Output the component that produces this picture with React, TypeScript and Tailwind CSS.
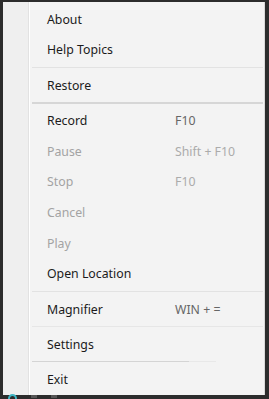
import React from 'react';

type Row =
  | { kind: 'item'; label: string; shortcut?: string; disabled?: boolean; h: number }
  | { kind: 'sep'; h: number; line: string; thick?: boolean; short?: boolean };

const rows: Row[] = [
  { kind: 'item', label: 'About', h: 30 },
  { kind: 'item', label: 'Help Topics', h: 30 },
  { kind: 'sep', h: 6, line: 'bg-[#e2e2e2]' },
  { kind: 'item', label: 'Restore', h: 30 },
  { kind: 'sep', h: 5, line: 'bg-[#d6d6d6]', thick: true },
  { kind: 'item', label: 'Record', shortcut: 'F10', h: 30.6 },
  { kind: 'item', label: 'Pause', shortcut: 'Shift + F10', disabled: true, h: 30.6 },
  { kind: 'item', label: 'Stop', shortcut: 'F10', disabled: true, h: 30.6 },
  { kind: 'item', label: 'Cancel', disabled: true, h: 30.6 },
  { kind: 'item', label: 'Play', disabled: true, h: 30.6 },
  { kind: 'item', label: 'Open Location', h: 30.6 },
  { kind: 'sep', h: 6, line: 'bg-[#e2e2e2]' },
  { kind: 'item', label: 'Magnifier', shortcut: 'WIN + =', h: 29.5 },
  { kind: 'sep', h: 5, line: 'bg-[#e6e6e6]' },
  { kind: 'item', label: 'Settings', h: 29.5 },
  { kind: 'sep', h: 6, line: 'bg-[#d8d8d8]', short: true },
  { kind: 'item', label: 'Exit', h: 30 },
];

export default function App() {
  return (
    <div className="w-[269px] h-[399px] bg-[#2c2c2c] flex flex-col overflow-hidden" style={{ fontFamily: '"Noto Sans", "Open Sans", sans-serif' }}>
      <div className="h-[2px] shrink-0" />
      <div className="flex flex-1 pl-[3px] pr-[4px]">
        <div className="flex flex-1 bg-[#f3f3f3] border-r border-[#d9d9d9]">
          {/* icon gutter */}
          <div className="w-[26px] bg-[#efefef] border-r border-[#e2e2e2] shrink-0" />
          <div className="w-px bg-white shrink-0" />
          <div className="flex-1 flex flex-col pt-[2px]">
            {rows.map((r, i) =>
              r.kind === 'sep' ? (
                <div key={i} className="flex items-center pl-[2px] pr-[1px]" style={{ height: r.h }}>
                  {r.short ? (
                    <div className="flex w-full">
                      <div className="h-px w-[157px] bg-[#d4d4d4]" />
                      <div className="h-px w-[27px] bg-[#e8e8e8]" />
                    </div>
                  ) : (
                    <div className={`w-full ${r.thick ? 'h-[2px]' : 'h-px'} ${r.line}`} />
                  )}
                </div>
              ) : (
                <div key={i} className="flex items-center pt-[2px] text-[12.3px] leading-none" style={{ height: r.h }}>
                  <span className={`pl-[17px] w-[145px] ${r.disabled ? 'text-[#a3a3a3]' : 'text-[#1b1b1b]'}`}>{r.label}</span>
                  {r.shortcut && (
                    <span className={r.disabled ? 'text-[#ababab]' : 'text-[#666666]'}>{r.shortcut}</span>
                  )}
                </div>
              )
            )}
          </div>
        </div>
      </div>
      <div className="h-[4px] shrink-0 flex items-start pl-[8px] gap-[14px]">
        <div className="w-[9px] h-[9px] -mt-[1px] rounded-full border-2 border-[#3fb6c4]" />
        <div className="w-[6px] h-[3px] bg-[#555]" />
        <div className="w-[6px] h-[3px] bg-[#555]" />
      </div>
    </div>
  );
}
